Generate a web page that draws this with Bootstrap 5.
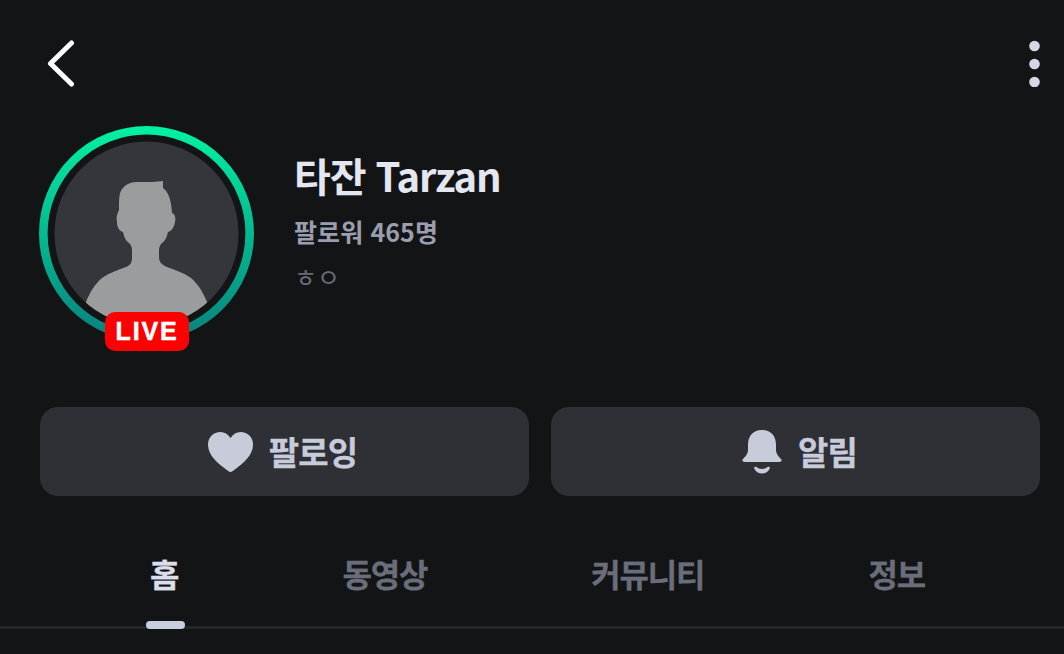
<!DOCTYPE html>
<html lang="ko">
<head>
  <meta charset="UTF-8" />
  <meta name="viewport" content="width=device-width, initial-scale=1.0"/>
  <title>Tarzan</title>
  <link href="https://cdn.jsdelivr.net/npm/bootstrap@5.3.0/dist/css/bootstrap.min.css" rel="stylesheet"/>
  <style>
    html, body { height: 100%; }
    body {
      background: #131416;
      font-family: "Noto Sans CJK KR", "Noto Sans", sans-serif;
      overflow: hidden;
    }
    .top-bar { height: 126px; padding: 40px 24px 0 47px; }
    .avatar-wrap { width: 215px; height: 215px; flex: none; }
    .avatar-ring { display: block; }
    .live-tag {
      position: absolute; left: 66px; top: 186px; width: 84px; height: 39px;
      background: #fb0102; border-radius: 10px; color: #fff;
      font-family: "Liberation Sans", sans-serif; font-weight: 700; font-size: 25px;
      letter-spacing: 1.8px; line-height: 39px; text-align: center;
      -webkit-text-stroke: .5px #fff;
    }
    .profile-row { padding-left: 39px; }
    .profile-text { margin-left: 40px; padding-top: 20px; }
    .name-text { font-size: 40px; font-weight: 700; color: #e4e6f0; line-height: 58px; letter-spacing: -1.1px; }
    .follower-text { font-size: 25px; font-weight: 700; color: #9a9eae; line-height: 36px; margin-top: 9px; letter-spacing: .1px; }
    .desc-text { font-size: 25px; color: #686c79; line-height: 30px; margin-top: 12px; }
    .action-row { display: grid; grid-template-columns: 1fr 1fr; padding: 0 24px 0 40px; margin-top: 66px; gap: 22px; }
    .action-btn {
      height: 89px; padding: 0 0 2px; background: #2e3036; border: 0; border-radius: 18px;
      color: #c8ccda; font-size: 33px; font-weight: 700; letter-spacing: -.8px; line-height: 46px;
      -webkit-text-stroke: .3px #c8ccda;
    }
    .action-btn:hover, .action-btn:active { background: #2e3036 !important; color: #c8ccda !important; }
    .btn-ico { margin-top: 2px; }
    .tab-row { margin-top: 44px; padding: 0 57px 0 68px; border-bottom: 3px solid #24262a; height: 89px; }
    .tab-row .nav-item { height: 86px; }
    .tab-label {
      display: inline-block; height: 86px; padding: 0; line-height: 66px; position: relative;
      font-size: 32px; font-weight: 700; color: #6a6e7b; letter-spacing: -1.2px;
      -webkit-text-stroke: .3px currentColor;
    }
    .tab-label.on { color: #dcdfea; }
    .tab-label.on::after {
      content: ""; position: absolute; left: -4px; right: -7px; bottom: -3px; height: 8px;
      background: #c8d0de; border-radius: 4px;
    }
  </style>
</head>
<body>
  <div class="top-bar d-flex justify-content-between align-items-start">
    <svg width="28" height="47" viewBox="0 0 28 47"><path d="M24.500 3 3.500 23.500 24.500 44" fill="none" stroke="#fff" stroke-width="5" stroke-linecap="round" stroke-linejoin="round"/></svg>
    <svg width="11" height="47" viewBox="0 0 11 47"><g fill="#d5d8e4"><circle cx="5.500" cy="6" r="5.300"/><circle cx="5.500" cy="24" r="5.300"/><circle cx="5.500" cy="42" r="5.300"/></g></svg>
  </div>

  <div class="profile-row d-flex">
    <div class="avatar-wrap position-relative">
      <svg class="avatar-ring" width="215" height="215" viewBox="0 0 215 215">
        <defs>
          <linearGradient id="ringGrad" x1="0" y1="0" x2="0" y2="1">
            <stop offset="0" stop-color="#00f0a2"/>
            <stop offset="1" stop-color="#08837f"/>
          </linearGradient>
          <clipPath id="photoClip"><circle cx="107.500" cy="107.500" r="92"/></clipPath>
        </defs>
        <circle cx="107.500" cy="107.500" r="103.200" fill="none" stroke="url(#ringGrad)" stroke-width="8.600"/>
        <circle cx="107.500" cy="107.500" r="92" fill="#35363c"/>
        <path clip-path="url(#photoClip)" fill="#9b9c9e" d="M80 84C80 72 80 66 84 62 88 57 93 56 100 56 110 56 118 56 124 55L124 62C129 66 132 72 133 87 136 88 137 92 136 96 135 101 133 105 129 106 128 111 126 115 123 117 121 119 120 121 120 124V131C120 136 123 139 128 141 136 144 145 147 152 152 159 158 164 166 168 176L190 215H30L47 176C51 166 56 158 63 152 70 147 79 144 87 141 92 139 93 136 93 131V124C93 121 92 119 90 117 87 115 85 111 84 106 80 105 78 101 78 96 77 92 78 88 80 84Z"/>
      </svg>
      <div class="live-tag">LIVE</div>
    </div>
    <div class="profile-text">
      <div class="name-text">타잔 Tarzan</div>
      <div class="follower-text">팔로워 465명</div>
      <div class="desc-text">ㅎㅇ</div>
    </div>
  </div>

  <div class="action-row">
    <button class="btn action-btn d-flex align-items-center justify-content-center gap-3" type="button">
      <svg class="btn-ico" width="45" height="40" viewBox="0 0 45 40"><path fill="#c8ccda" d="M22.500 40C21 40 19.500 38.500 17.500 37 9 30.500 0 23 0 12.500 0 5 5.500 0 12.500 0 16.500 0 20 2 22.500 6 25 2 28.500 0 32.500 0 39.500 0 45 5 45 12.500 45 23 36 30.500 27.500 37 25.500 38.500 24 40 22.500 40Z"/></svg>
      <span class="me-1">팔로잉</span>
    </button>
    <button class="btn action-btn d-flex align-items-center justify-content-center gap-3" type="button">
      <svg class="btn-ico ms-2" width="40" height="44" viewBox="0 0 40 44"><path fill="#c8ccda" d="M20 0C30 0 34 7 34 15V20C34 24 37 27 39 29 40.500 31 39.500 32 37 32H3C.5 32-.5 31 1 29 3 27 6 24 6 20V15C6 7 10 0 20 0Z"/><path fill="#c8ccda" d="M12.500 37C13 36.500 14 36.500 14.500 37 17 39.500 23 39.500 25.500 37 26 36.500 27 36.500 27.500 37 28 37.500 28 38 27.500 39 26 42 23 43.500 20 43.500 17 43.500 14 42 12.500 39 12 38 12 37.500 12.500 37Z"/></svg>
      <span>알림</span>
    </button>
  </div>

  <ul class="nav nav-fill tab-row">
    <li class="nav-item"><a class="tab-label on text-decoration-none" href="#">홈</a></li>
    <li class="nav-item"><a class="tab-label text-decoration-none" href="#">동영상</a></li>
    <li class="nav-item"><a class="tab-label text-decoration-none" href="#">커뮤니티</a></li>
    <li class="nav-item"><a class="tab-label text-decoration-none" href="#">정보</a></li>
  </ul>
</body>
</html>
